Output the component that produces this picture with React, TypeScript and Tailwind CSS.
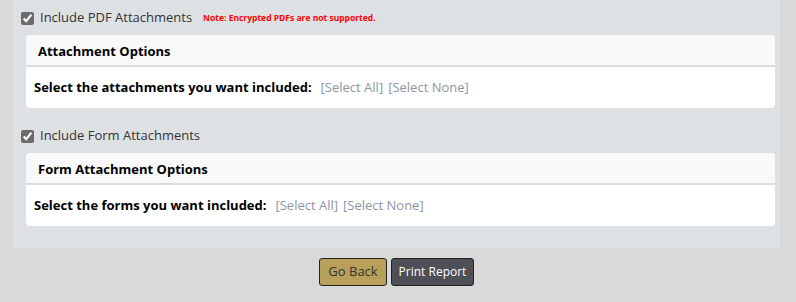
import React from 'react';

interface OptionsCardProps {
    title: string;
    prompt: string;
}

function OptionsCard({ title, prompt }: OptionsCardProps) {
    return (
        <div className="ml-[13px] mr-[5px] rounded-[4px] bg-white overflow-hidden">
            <div className="h-[32px] bg-[#f9f9f9] border-b-2 border-[#dcdcdc] flex items-center pl-[12px] pt-[3px]">
                <span className="text-[13px] font-bold text-black">{title}</span>
            </div>
            <div className="h-[41px] flex items-center pl-[8px]">
                <span className="text-[13px] font-bold text-black">{prompt}</span>
                <span className="ml-[9px] text-[13px] text-[#8c96a3]">[Select All]</span>
                <span className="ml-[5px] text-[13px] text-[#8c96a3]">[Select None]</span>
            </div>
        </div>
    );
}

function Check({ label, note }: { label: string; note?: string }) {
    return (
        <label className="flex items-center h-[20px] pl-[8px]">
            <input type="checkbox" defaultChecked className="w-[13px] h-[13px] accent-[#6b6b6b] m-0" />
            <span className="ml-[6px] text-[13px] text-[#333]">{label}</span>
            {note && <span className="ml-[11px] text-[8.5px] font-bold text-[#ff0000]">{note}</span>}
        </label>
    );
}

export default function App() {
    return (
        <div
            className="w-[796px] h-[302px] bg-[#d9d9d9] overflow-hidden"
            style={{ fontFamily: '"Open Sans", "Noto Sans", sans-serif' }}
        >
            {/* Attachments panel */}
            <div className="ml-[13px] w-[767px] h-[248px] bg-[#dee1e4] pt-[8px]">
                <Check label="Include PDF Attachments" note="Note: Encrypted PDFs are not supported." />
                <div className="mt-[7px]">
                    <OptionsCard title="Attachment Options" prompt="Select the attachments you want included:" />
                </div>
                <div className="mt-[18px]">
                    <Check label="Include Form Attachments" />
                </div>
                <div className="mt-[7px]">
                    <OptionsCard title="Form Attachment Options" prompt="Select the forms you want included:" />
                </div>
            </div>

            {/* Actions */}
            <div className="flex justify-center gap-[4px] mt-[10px] pr-[3px]">
                <button className="h-[28px] w-[68px] rounded-[3px] border border-[#222] bg-[#b9a05a] text-[13px] text-[#333]">
                    Go Back
                </button>
                <button className="h-[28px] w-[83px] rounded-[3px] border border-[#222] bg-[#4f5057] text-[12px] text-white">
                    Print Report
                </button>
            </div>
        </div>
    );
}
